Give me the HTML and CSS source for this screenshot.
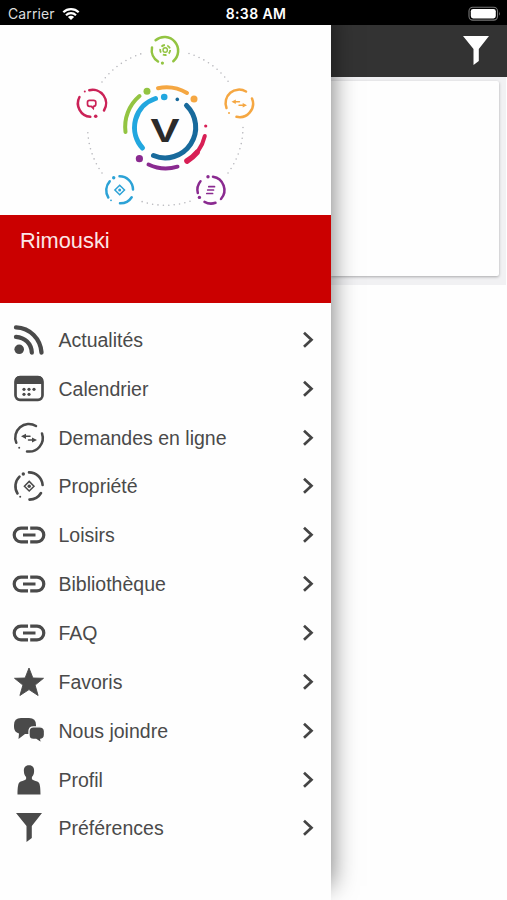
FILE: index.html
```html
<!DOCTYPE html>
<html lang="fr">
<head>
  <meta charset="UTF-8">
  <title>Rimouski</title>
  <link rel="stylesheet" href="styles.css">
</head>
<body>
<svg class="defs" width="0" height="0">
  <symbol id="chevron" viewBox="0 0 12 18">
    <path d="M2 1.800l7.500 7L2 15.800" fill="none" stroke="#444" stroke-width="2.700"/>
  </symbol>
  <symbol id="link" viewBox="0 0 34 34">
    <path d="M16 10.200H9a6.800 6.800 0 0 0 0 13.600h7M18.200 10.200H25a6.800 6.800 0 0 1 0 13.600h-6.800" fill="none" stroke="#4a4a4a" stroke-width="3.200"/>
    <path d="M11 17h12.500" stroke="#4a4a4a" stroke-width="3"/>
  </symbol>
  <symbol id="funnel" viewBox="0 0 28 30">
    <path d="M1 .5h26L16.800 13.500v12L11.500 29.500v-16z"/>
  </symbol>
</svg>

<header class="status-bar">
  <div class="carrier">
    <span>Carrier</span>
    <svg width="18" height="14" viewBox="0 0 18 14">
      <g fill="none" stroke="#fff" stroke-width="2.200">
        <path d="M1.300 5.200a11 11 0 0 1 15.400 0"/>
        <path d="M4 8.200a7.200 7.200 0 0 1 10 0"/>
      </g>
      <path d="M9 13L5.900 10.100a4.500 4.500 0 0 1 6.200 0z" fill="#fff"/>
    </svg>
  </div>
  <div class="clock">8:38 AM</div>
  <svg class="battery" width="33" height="16" viewBox="0 0 33 16">
    <rect x="1" y="1.300" width="28.500" height="12.800" rx="3.800" fill="none" stroke="#777" stroke-width="1.100"/>
    <rect x="2.800" y="3" width="25" height="9.400" rx="2.300" fill="#fff"/>
    <path d="M31 5.500q1.500 2 0 4.200z" fill="#777"/>
  </svg>
</header>

<div class="app">
  <nav class="drawer">
    <svg class="logo" width="331" height="190" viewBox="0 25 331 190" fill="none" stroke-linecap="round">
      <!-- dotted orbit -->
      <g stroke="#b8b8bd" stroke-width="1.600" stroke-dasharray="0 5.400">
        <path d="M102 82A77.700 77.700 0 0 1 142 53.500"/>
        <path d="M189 53.500A77.700 77.700 0 0 1 229 82.500"/>
        <path d="M243 127.500A77.700 77.700 0 0 1 228 173"/>
        <path d="M190 201.300A77.700 77.700 0 0 1 141 201.300"/>
        <path d="M102 173A77.700 77.700 0 0 1 87.700 127.500"/>
      </g>
      <!-- center -->
      <g stroke-width="5">
        <path d="M142.500 148A30.500 30.500 0 0 1 155.500 98.500" stroke="#22a7df"/>
        <path d="M186.500 105.500A30.500 30.500 0 0 1 153.500 155.500" stroke="#186a9c"/>
      </g>
      <g stroke-width="4">
        <path d="M125.500 132A40.300 40.300 0 0 1 139.500 96" stroke="#93c442"/>
        <path d="M158 88.200A40.300 40.300 0 0 1 187 93" stroke="#f5a742"/>
        <path d="M204.800 136A40.300 40.300 0 0 1 187 161" stroke="#d81f55"/>
        <path d="M177.500 166.700A40.300 40.300 0 0 1 148.500 164.500" stroke="#8a2a90"/>
      </g>
      <path d="M197 152.500A40.300 40.300 0 0 1 187 161" stroke="#d81f55" stroke-width="5.600"/>
      <circle cx="147" cy="91.300" r="3.500" fill="#93c442"/>
      <circle cx="164.200" cy="97" r="3.300" fill="#22a7df"/>
      <circle cx="177.300" cy="99.400" r="1.800" fill="#186a9c"/>
      <circle cx="194" cy="99" r="3.500" fill="#f5a742"/>
      <circle cx="205.700" cy="126" r="1.600" fill="#d81f55"/>
      <circle cx="139.400" cy="158.700" r="3.600" fill="#8a2a90"/>
      <text class="logo-letter" x="150.500" y="142" textLength="29" lengthAdjust="spacingAndGlyphs">V</text>
      <!-- green -->
      <g stroke="#93c442" stroke-width="2.500">
        <path d="M155.600 40.300A13.500 13.500 0 1 1 173.300 61.200"/>
        <path d="M152 47.500A13.500 13.500 0 0 0 158 61.500"/>
        <circle cx="165.200" cy="50" r="2.200" stroke-width="1.400"/>
        <circle cx="165.200" cy="50" r="5" stroke-width="1.800" stroke-dasharray="3.800 2.480" stroke-linecap="butt"/>
      </g>
      <circle cx="162.400" cy="63.100" r="1.600" fill="#93c442"/>
      <!-- pink -->
      <g stroke="#cb2257" stroke-width="2.500">
        <path d="M89.300 90.200A13.500 13.500 0 0 1 104 110.500"/>
        <path d="M79.500 97A13.500 13.500 0 0 0 90.300 116.800"/>
        <path d="M89.500 100.300h4q2.300 0 2.300 2v2q0 2-2.300 2l-.2 2-2-2h-1.800q-2 0-2-2v-2q0-2 2-2z" stroke-width="1.700"/>
      </g>
      <circle cx="84.800" cy="91.600" r="1" fill="#cb2257"/>
      <circle cx="95.700" cy="116.300" r="1.800" fill="#cb2257"/>
      <!-- orange -->
      <g stroke="#f5a742" stroke-width="2.500">
        <path d="M246 91.500A13.500 13.500 0 0 0 226.500 108"/>
        <path d="M252 98.500A13.500 13.500 0 0 1 236.500 116.800"/>
        <path d="M234 101.800h5.500M239 105.200h5.500" stroke-width="1.400"/>
      </g>
      <path d="M231.500 101.800l4.300-2.300v4.600zM247 105.200l-4.300-2.300v4.600z" fill="#f5a742"/>
      <circle cx="229" cy="113" r="1" fill="#f5a742"/>
      <!-- blue -->
      <g stroke="#2ca2d6" stroke-width="2.500">
        <path d="M119.500 176.300A13.500 13.500 0 0 1 133 189.500"/>
        <path d="M131.700 197.200A13.500 13.500 0 0 1 120 203.300"/>
        <path d="M108.300 197.500A13.500 13.500 0 0 1 109.700 181.300"/>
        <path d="M119.700 185.200l4.800 4.800-4.800 4.800-4.800-4.800z" stroke-width="1.500"/>
      </g>
      <circle cx="119.700" cy="190" r="1.500" fill="#2ca2d6"/>
      <circle cx="113.700" cy="177.700" r="1.700" fill="#2ca2d6"/>
      <circle cx="111" cy="200.300" r=".9" fill="#2ca2d6"/>
      <!-- purple -->
      <g stroke="#8a2a90" stroke-width="2.500">
        <path d="M213 176.700A13.500 13.500 0 0 1 221 199"/>
        <path d="M215.500 202.800A13.500 13.500 0 0 1 204.500 201.900"/>
        <path d="M197.800 193A13.500 13.500 0 0 1 200.500 181.300"/>
        <path d="M208.800 186.700h5.700M207.700 190h5.800M206.800 193.500h5.800" stroke-width="1.700"/>
      </g>
      <circle cx="208" cy="176.700" r="1.700" fill="#8a2a90"/>
      <circle cx="199.400" cy="197.400" r="1.700" fill="#8a2a90"/>
    </svg>

    <div class="city">Rimouski</div>

    <ul class="menu">
      <li>
        <svg class="icon" viewBox="0 0 34 34">
          <circle cx="7.200" cy="26.300" r="4.800"/>
          <path d="M4 13.800C13 14.500 19.300 20.500 19.800 29.500M4 4.300C18 5 28.500 15.500 29.500 29.500" fill="none" stroke="#4a4a4a" stroke-width="4.300" stroke-linecap="round"/>
        </svg>
        <span>Actualités</span>
        <svg class="chevron"><use href="#chevron"/></svg>
      </li>
      <li>
        <svg class="icon" viewBox="0 0 34 34">
          <rect x="3.500" y="5.200" width="27" height="22.600" rx="4.500" fill="none" stroke="#4a4a4a" stroke-width="2.700"/>
          <path d="M3 12V9q0-5 5-5h18q5 0 5 5v3z"/>
          <circle cx="12" cy="17.300" r="1.600"/>
          <circle cx="17" cy="17.300" r="1.600"/>
          <circle cx="22" cy="17.300" r="1.600"/>
          <circle cx="12" cy="22.300" r="1.600"/>
          <circle cx="17" cy="22.300" r="1.600"/>
        </svg>
        <span>Calendrier</span>
        <svg class="chevron"><use href="#chevron"/></svg>
      </li>
      <li>
        <svg class="icon" viewBox="0 0 34 34">
          <g fill="none" stroke="#4a4a4a" stroke-width="2.500" stroke-linecap="round">
            <path d="M24 5A13.600 13.600 0 0 0 4.300 21.800"/>
            <path d="M30 12.500A13.600 13.600 0 0 1 15 30.400"/>
            <path d="M12 15.300h6M16.500 19h6" stroke-width="1.500"/>
          </g>
          <path d="M9 15.300l5-2.600v5.200zM25 19l-5-2.600v5.200z"/>
          <circle cx="7.200" cy="26.700" r="1"/>
        </svg>
        <span>Demandes en ligne</span>
        <svg class="chevron"><use href="#chevron"/></svg>
      </li>
      <li>
        <svg class="icon" viewBox="0 0 34 34">
          <g fill="none" stroke="#4a4a4a" stroke-width="2.600" stroke-linecap="round">
            <path d="M17 3.400A13.600 13.600 0 0 1 30.600 16"/>
            <path d="M29 24A13.600 13.600 0 0 1 17.500 30.600"/>
            <path d="M5.500 24.500A13.600 13.600 0 0 1 7.500 7.600"/>
            <path d="M17.200 12.400l4.800 4.800-4.800 4.800-4.800-4.800z" stroke-width="1.500"/>
          </g>
          <circle cx="17.200" cy="17.200" r="1.700"/>
          <circle cx="11.300" cy="5" r="1.700"/>
          <circle cx="8.200" cy="27.800" r="1"/>
        </svg>
        <span>Propriété</span>
        <svg class="chevron"><use href="#chevron"/></svg>
      </li>
      <li>
        <svg class="icon"><use href="#link"/></svg>
        <span>Loisirs</span>
        <svg class="chevron"><use href="#chevron"/></svg>
      </li>
      <li>
        <svg class="icon"><use href="#link"/></svg>
        <span>Bibliothèque</span>
        <svg class="chevron"><use href="#chevron"/></svg>
      </li>
      <li>
        <svg class="icon"><use href="#link"/></svg>
        <span>FAQ</span>
        <svg class="chevron"><use href="#chevron"/></svg>
      </li>
      <li>
        <svg class="icon" viewBox="0 0 34 34">
          <path d="M17 3l3.900 10 10.600.3-8.400 6.800 3 10.400L17 24.600 7.900 30.500l3-10.400-8.400-6.800 10.600-.3z" stroke="#4a4a4a" stroke-width=".9" stroke-linejoin="round"/>
        </svg>
        <span>Favoris</span>
        <svg class="chevron"><use href="#chevron"/></svg>
      </li>
      <li>
        <svg class="icon" viewBox="0 0 34 34">
          <path d="M9 4h8q7 0 7 7v2q0 7-7 7h-4l-6.500 5L7 19.500q-5-1.500-5-6.500v-2q0-7 7-7z"/>
          <path d="M21.500 12.800h6q5 0 5 4.500v3.500q0 4-3.700 4.600l.7 3.700-5.500-3.600h-2.500q-4.500 0-4.500-4.500v-3.700q0-4.500 4.500-4.500z" stroke="#fff" stroke-width="1.300"/>
        </svg>
        <span>Nous joindre</span>
        <svg class="chevron"><use href="#chevron"/></svg>
      </li>
      <li>
        <svg class="icon" viewBox="0 0 34 34">
          <path d="M17 2.200c3.800 0 5.300 2.500 5.100 6-.1 3-1 4.500-2.200 5.700v2.300c2 1.500 5.400 1.800 6.800 3.300 1.500 1.800 1.700 6.500 1.800 12H5.500c.1-5.500.3-10.200 1.800-12 1.400-1.500 4.800-1.800 6.800-3.300v-2.300c-1.200-1.200-2.100-2.700-2.200-5.700-.2-3.500 1.300-6 5.100-6z"/>
        </svg>
        <span>Profil</span>
        <svg class="chevron"><use href="#chevron"/></svg>
      </li>
      <li>
        <svg class="icon" viewBox="0 0 34 34"><use href="#funnel" x="3" y="1.500" width="28" height="30"/></svg>
        <span>Préférences</span>
        <svg class="chevron"><use href="#chevron"/></svg>
      </li>
    </ul>
  </nav>

  <main class="page">
    <div class="toolbar">
      <svg class="filter" width="28" height="31"><use href="#funnel"/></svg>
    </div>
    <div class="panel">
      <div class="card"></div>
    </div>
  </main>
</div>
</body>
</html>
```
FILE: styles.css
```css
* {
  box-sizing: border-box;
}
body {
  margin: 0;
  height: 900px;
  display: flex;
  flex-direction: column;
  overflow: hidden;
  background-color: #fefefe;
  font-family: "Liberation Sans", Arial, sans-serif;
}
.defs {
  position: absolute;
}

/* status bar */
.status-bar {
  height: 25px;
  flex: none;
  display: grid;
  grid-template-columns: 1fr auto 1fr;
  align-items: center;
  padding: 2px 6px 0 8px;
  background-color: #000;
  color: #fff;
  font-family: Inter, sans-serif;
  font-size: 14px;
  z-index: 3;
}
.carrier {
  display: flex;
  align-items: center;
  gap: 7px;
  color: #ddd;
  letter-spacing: 0.1px;
}
.clock {
  font-weight: 600;
  letter-spacing: 0.4px;
  padding-left: 3px;
}
.battery {
  justify-self: end;
}

.app {
  flex: 1;
  display: flex;
}

/* drawer */
.drawer {
  width: 331px;
  flex: none;
  background-color: #fefefe;
  box-shadow: 0 -14px 24px rgba(0, 0, 0, 0.55);
  z-index: 2;
}
.logo {
  display: block;
}
.logo-letter {
  font-family: "Liberation Sans", Arial, sans-serif;
  font-size: 34px;
  font-weight: bold;
  fill: #2b2b2b;
}
.city {
  height: 87.5px;
  padding: 13px 20px;
  background-color: #cb0000;
  color: #fbe6e6;
  font-size: 21.8px;
  line-height: 25px;
}
.menu {
  list-style: none;
  margin: 0;
  padding: 13px 17px 0 12px;
}
.menu li {
  height: 48.85px;
  display: flex;
  align-items: center;
  gap: 12px;
  color: #4a4a4a;
  font-size: 19.5px;
}
.menu span {
  flex: 1;
  padding: 1px 0 0 0.5px;
}
.icon {
  width: 34px;
  height: 34px;
  fill: #4a4a4a;
}
.chevron {
  width: 12px;
  height: 18px;
}

/* page behind the drawer */
.page {
  flex: 1;
}
.toolbar {
  height: 51.5px;
  display: flex;
  justify-content: flex-end;
  padding: 10px 17px 0 0;
  background-color: #333;
}
.filter {
  fill: #fff;
}
.panel {
  height: 208.5px;
  margin-right: 1px;
  padding: 4px 7px 9px 0;
  background-color: #f1f1f3;
}
.card {
  height: 195.5px;
  background-color: #fefefe;
  border-radius: 0 2px 2px 0;
  box-shadow: 0 1px 3px rgba(0, 0, 0, 0.3);
}
```
